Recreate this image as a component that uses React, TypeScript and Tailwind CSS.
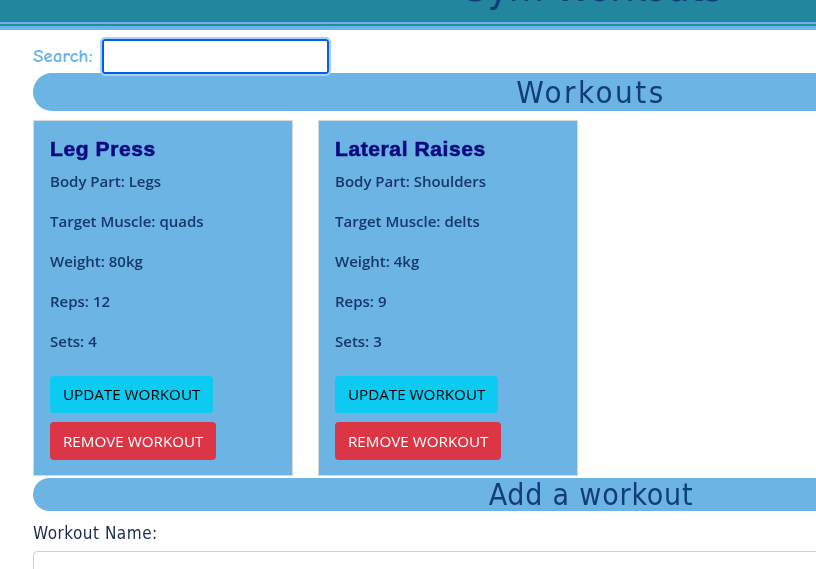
const workouts = [
  { name: "Leg Press", part: "Legs", muscle: "quads", weight: "80kg", reps: 12, sets: 4 },
  { name: "Lateral Raises", part: "Shoulders", muscle: "delts", weight: "4kg", reps: 9, sets: 3 },
];

const body = { fontFamily: '"Open Sans", "Noto Sans", sans-serif' };
const cond = { fontFamily: '"DejaVu Sans Condensed", "DejaVu Sans", sans-serif' };

function WorkoutCard({ w }: { w: (typeof workouts)[number] }) {
  return (
    <div className="w-[260px] h-[356px] border border-[#d8d8d8] bg-[#6cb4e4] px-4 pt-[14px]" style={body}>
      <h3
        className="text-[21px] font-bold leading-[28px] tracking-[0.6px] text-[#0b0b7e] [-webkit-text-stroke:0.6px_#0b0b7e]"
        style={{ fontFamily: '"Liberation Sans", Arial, sans-serif' }}
      >
        {w.name}
      </h3>
      <div className="mt-[7px] text-[15px] font-semibold text-[#16386b]">
        <p className="h-[40px] leading-[22px]">Body Part: {w.part}</p>
        <p className="h-[40px] leading-[22px]">Target Muscle: {w.muscle}</p>
        <p className="h-[40px] leading-[22px]">Weight: {w.weight}</p>
        <p className="h-[40px] leading-[22px]">Reps: {w.reps}</p>
        <p className="h-[40px] leading-[22px]">Sets: {w.sets}</p>
      </div>
      <div className="mt-[6px] flex flex-col items-start gap-[9px]" style={{ fontFamily: '"Open Sans", sans-serif' }}>
        <button className="h-[37px] rounded bg-[#0dcaf0] px-[13px] text-[15.2px] text-black">UPDATE WORKOUT</button>
        <button className="h-[38px] rounded bg-[#dc3545] px-[13px] text-[15.2px] text-white">REMOVE WORKOUT</button>
      </div>
    </div>
  );
}

export default function App() {
  return (
    <div className="h-[569px] w-[816px] overflow-hidden bg-white">
      <div className="w-[1182px]">
        <header className="relative h-[31px] overflow-hidden">
          <div className="h-[22px] bg-[#21869e]" />
          <div className="h-[2px] bg-[#6cb4e4]" />
          <div className="h-[2px] bg-[#2a89a8]" />
          <div className="h-[4px] bg-[#6cb4e4]" />
          <h1
            className="absolute left-0 right-0 top-[-35px] text-center text-[40px] leading-[44px] text-[#123d7a]"
            style={cond}
          >
            Gym Workouts
          </h1>
        </header>

        <div className="mx-[33px]">
          <div className="mt-[8px] flex h-[35px] items-center">
            <label
              className="w-[69px] text-[19px] font-bold text-[#6cb4e4]"
              style={{ fontFamily: '"Comic Neue", "DejaVu Sans", sans-serif' }}
            >
              Search:
            </label>
            <input
              autoFocus
              className="h-[35px] w-[227px] rounded-[3px] border-2 border-[#0060df] px-[5px] text-[15px] outline outline-2 outline-[#a8d1f5]"
            />
          </div>

          <div className="-mt-px flex h-[38px] items-center justify-center rounded-l-[19px] bg-[#6cb4e4]">
            <h2 className="text-[31px] tracking-[2.5px] text-[#123d7a]" style={cond}>
              Workouts
            </h2>
          </div>

          <div className="mt-[9px] flex gap-[25px]">
            {workouts.map((w) => (
              <WorkoutCard key={w.name} w={w} />
            ))}
          </div>

          <div className="mt-[2px] flex h-[33px] items-center justify-center rounded-l-[17px] bg-[#6cb4e4]">
            <h2 className="text-[30px] tracking-[0.8px] text-[#123d7a]" style={cond}>
              Add a workout
            </h2>
          </div>

          <label className="mt-[10px] block text-[17px] tracking-[0.5px] text-[#1a2b4c]" style={cond}>
            Workout Name:
          </label>
          <input className="mt-[4px] block h-[38px] w-full rounded border border-[#ced4da]" />
        </div>
      </div>
    </div>
  );
}
